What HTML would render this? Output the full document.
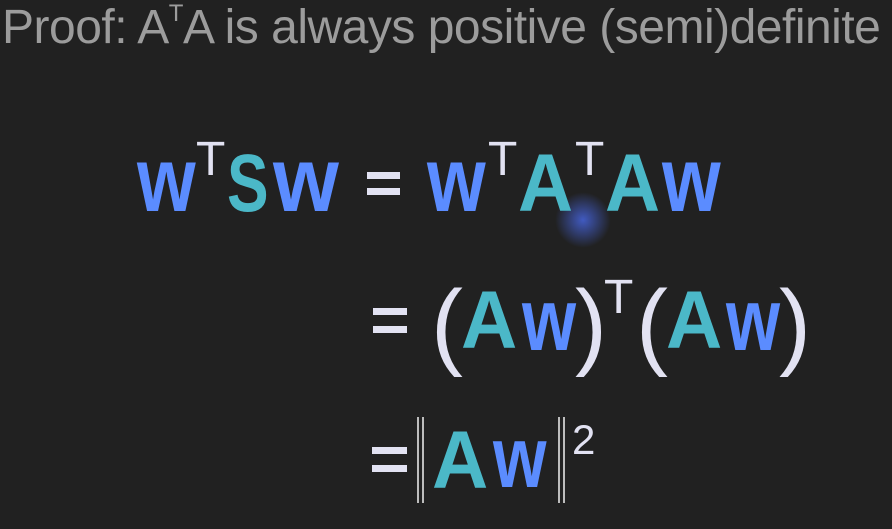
<!DOCTYPE html>
<html><head><meta charset="utf-8"><style>
body{margin:0;width:892px;height:529px;background:#212121;overflow:hidden;position:relative;font-family:"Liberation Sans",sans-serif}
.g{position:absolute;line-height:1;white-space:nowrap;transform-origin:0 0}
.b{color:#5b8cff;font-weight:bold}
.t{color:#4bb8c8;font-weight:bold;font-size:82px}
.s{color:#e2e2f2;font-size:48px}
.p{color:#e2e2f2;font-size:96px}
.bar{position:absolute;width:2px;background:#bdbdbd}
.eq{position:absolute;height:7px;background:#e2e2f2}
</style></head><body>
<div class="g" style="left:2px;top:4px;font-size:48px;color:#9c9c9c;letter-spacing:-0.5px">Proof: A<span style="font-size:24px;position:relative;top:-22px">T</span>A is always positive (semi)definite</div>
<div style="position:absolute;left:555px;top:192px;width:56px;height:56px;border-radius:50%;background:radial-gradient(circle,rgba(70,100,220,.85),rgba(70,100,220,0) 70%)"></div>
<!-- line 1 -->
<div class="g b" style="left:137px;top:134px;font-size:92px;transform:scaleX(0.82)">w</div>
<div class="g s" style="left:196px;top:136px">T</div>
<div class="g t" style="left:227px;top:143px;transform:scaleX(0.76)">S</div>
<div class="g b" style="left:273px;top:134px;font-size:92px;transform:scaleX(0.92)">w</div>
<div class="eq" style="left:367px;top:172px;width:33px"></div>
<div class="eq" style="left:367px;top:188px;width:33px"></div>
<div class="g b" style="left:427px;top:134px;font-size:92px;transform:scaleX(0.82)">w</div>
<div class="g s" style="left:488px;top:136px">T</div>
<div class="g t" style="left:518px;top:143px;transform:scaleX(0.93)">A</div>
<div class="g s" style="left:575px;top:136px">T</div>
<div class="g t" style="left:605px;top:143px;transform:scaleX(0.93)">A</div>
<div class="g b" style="left:662px;top:134px;font-size:92px;transform:scaleX(0.82)">w</div>
<!-- line 2 -->
<div class="eq" style="left:373px;top:308px;width:34px"></div>
<div class="eq" style="left:373px;top:326px;width:34px"></div>
<div class="g p" style="left:431px;top:277px">(</div>
<div class="g t" style="left:461px;top:280px;transform:scaleX(0.95)">A</div>
<div class="g b" style="left:522px;top:276px;font-size:88px;transform:scaleX(0.79)">w</div>
<div class="g p" style="left:575px;top:277px">)</div>
<div class="g s" style="left:604px;top:274px">T</div>
<div class="g p" style="left:636px;top:277px">(</div>
<div class="g t" style="left:666px;top:280px;transform:scaleX(0.95)">A</div>
<div class="g b" style="left:726px;top:276px;font-size:88px;transform:scaleX(0.79)">w</div>
<div class="g p" style="left:779px;top:277px">)</div>
<!-- line 3 -->
<div class="eq" style="left:372px;top:447px;width:35px"></div>
<div class="eq" style="left:372px;top:465px;width:35px"></div>
<div class="bar" style="left:417px;top:417px;height:86px"></div>
<div class="bar" style="left:422px;top:417px;height:86px"></div>
<div class="g t" style="left:432px;top:420px;transform:scaleX(0.95)">A</div>
<div class="g b" style="left:493px;top:415px;font-size:86px;transform:scaleX(0.8)">w</div>
<div class="bar" style="left:558px;top:417px;height:86px"></div>
<div class="bar" style="left:563px;top:417px;height:86px"></div>
<div class="g s" style="left:572px;top:419px;font-size:42px">2</div>
</body></html>
